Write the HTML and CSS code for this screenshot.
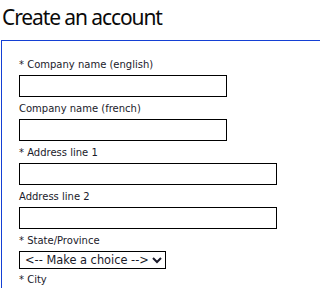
FILE: index.html
```html
<!DOCTYPE html>
<html>
<head>
<meta charset="utf-8">
<link rel="stylesheet" href="styles.css">
</head>
<body>
<h1 class="title">Create an account</h1>
<form class="panel">
  <div class="field">
    <label class="label">* Company name (english)</label>
    <input class="input short" type="text">
  </div>
  <div class="field">
    <label class="label">Company name (french)</label>
    <input class="input short" type="text">
  </div>
  <div class="field">
    <label class="label">* Address line 1</label>
    <input class="input long" type="text">
  </div>
  <div class="field">
    <label class="label">Address line 2</label>
    <input class="input long" type="text">
  </div>
  <div class="field field-select">
    <label class="label">* State/Province</label>
    <select class="select"><option>&lt;-- Make a choice --&gt;</option></select>
  </div>
  <div class="field">
    <label class="label">* City</label>
    <input class="input short" type="text">
  </div>
</form>
</body>
</html>
```
FILE: styles.css
```css
html, body {
  margin: 0;
  padding: 0;
  background: #fff;
  overflow: hidden;
}
.title {
  margin: 0;
  padding: 2px 0 0 2px;
  height: 40px;
  box-sizing: border-box;
  font-family: "Noto Sans", sans-serif;
  font-weight: normal;
  font-size: 21px;
  letter-spacing: -1.1px;
  line-height: 30px;
  color: #0a0a0a;
}
.panel {
  margin: 0 -20px 0 1px;
  border: 1px solid #1440d4;
  padding: 17px 0 0 17px;
}
.field {
  display: flex;
  flex-direction: column;
  align-items: flex-start;
  margin-bottom: 5px;
}
.field-select {
  margin-bottom: 4px;
}
.label {
  font-family: "DejaVu Sans", Verdana, sans-serif;
  font-size: 10px;
  line-height: 14px;
  color: #1a1a2a;
  margin-bottom: 3px;
}
.input {
  box-sizing: border-box;
  height: 22px;
  border: 1px solid #000;
  border-radius: 0;
  padding: 0;
  margin: 0;
  background: #fff;
}
.short { width: 208px; }
.long { width: 258px; }
.select {
  box-sizing: border-box;
  width: 147px;
  height: 18px;
  border: 1px solid #000;
  border-radius: 0;
  background: #fff;
  font-family: "DejaVu Sans", Verdana, sans-serif;
  font-size: 11.4px;
  color: #1a1a2a;
  padding: 0 0 0 1px;
  margin: 0;
}
```
